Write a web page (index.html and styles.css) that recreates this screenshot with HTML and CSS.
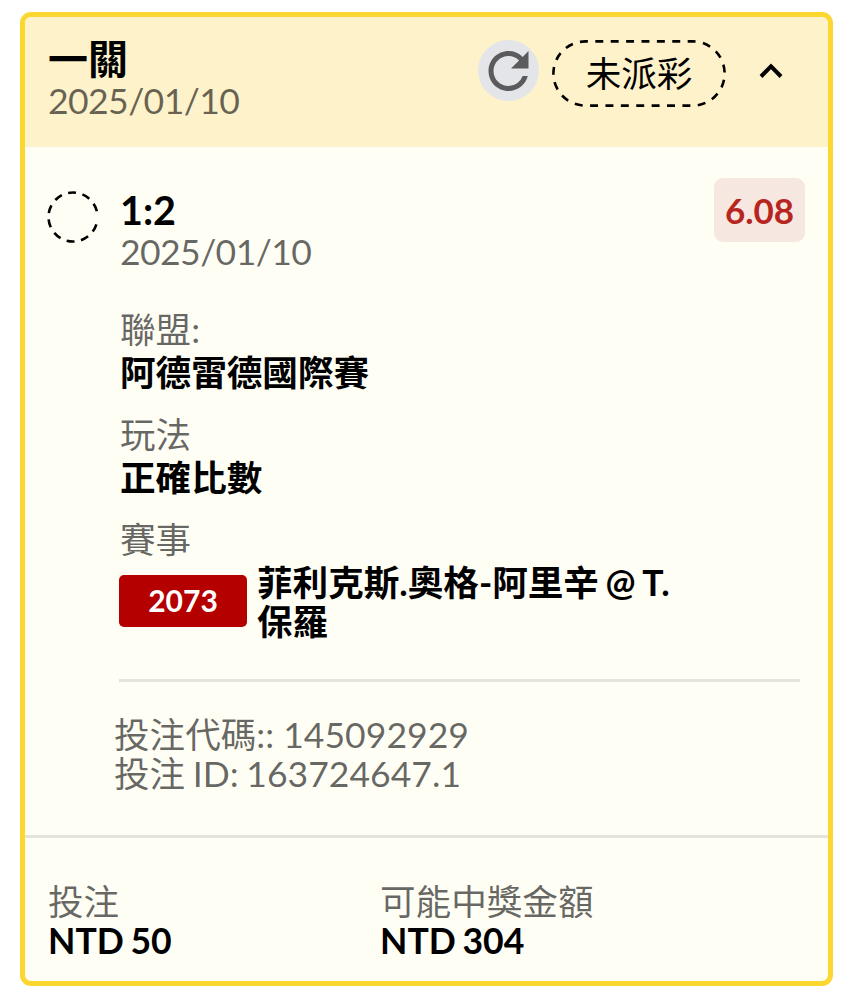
FILE: index.html
```html
<!DOCTYPE html>
<html lang="zh-Hant">
<head>
  <meta charset="UTF-8">
  <title>投注紀錄</title>
  <meta name="viewport" content="width=device-width, initial-scale=1">
  <link rel="stylesheet" href="styles.css">
</head>
<body>
  <div class="card">
    <header class="card-header">
      <div class="heading">
        <div class="title">一關</div>
        <div class="date">2025/01/10</div>
      </div>
      <button class="refresh" aria-label="refresh">
        <svg viewBox="0 0 24 24"><path d="M17.65 6.35A7.958 7.958 0 0 0 12 4c-4.42 0-7.99 3.58-7.99 8s3.57 8 7.99 8c3.73 0 6.84-2.55 7.73-6h-2.08A5.99 5.99 0 0 1 12 18c-3.31 0-6-2.69-6-6s2.69-6 6-6c1.66 0 3.14.69 4.22 1.78L13 11h7V4l-2.35 2.35z"/></svg>
      </button>
      <div class="status">
        <svg class="status-outline" viewBox="0 0 174 67"><rect x="1.4" y="1.4" width="171.2" height="64.2" rx="32" pathLength="418.5"/></svg>
        <span>未派彩</span>
      </div>
      <svg class="chevron" viewBox="0 0 24 16"><path d="M2 13.5 12 3.3l10 10.2"/></svg>
    </header>

    <section class="selection">
      <svg class="dot" viewBox="0 0 52 52"><circle cx="26" cy="26" r="24.5" pathLength="360"/></svg>
      <div class="details">
        <div class="pick-row">
          <div>
            <div class="pick">1:2</div>
            <div class="date">2025/01/10</div>
          </div>
          <div class="odds">6.08</div>
        </div>
        <dl class="info">
          <dt>聯盟:</dt>
          <dd>阿德雷德國際賽</dd>
          <dt>玩法</dt>
          <dd>正確比數</dd>
          <dt>賽事</dt>
        </dl>
        <div class="match">
          <span class="match-code">2073</span>
          <span class="match-name">菲利克斯.奧格-阿里辛 @ T.<br>保羅</span>
        </div>
        <div class="ids">
          <div>投注代碼:: 145092929</div>
          <div class="bet-id">投注 ID: 163724647.1</div>
        </div>
      </div>
    </section>

    <footer class="totals">
      <div>
        <div class="label">投注</div>
        <div class="amount">NTD 50</div>
      </div>
      <div>
        <div class="label">可能中獎金額</div>
        <div class="amount">NTD 304</div>
      </div>
    </footer>
  </div>
</body>
</html>
```
FILE: styles.css
```css
* {
  box-sizing: border-box;
}
body {
  margin: 0;
  padding: 12px 25px 14px 20px;
  background: #fff;
  color: #000;
  font-family: Lato, "Noto Sans CJK TC", sans-serif;
  font-size: 35.6px;
  line-height: 42px;
}
.card {
  height: 974px;
  border: 5px solid #fbd72f;
  border-radius: 11px;
  background: #fffef5;
  overflow: hidden;
}
.date {
  color: rgba(0, 0, 0, 0.6);
  letter-spacing: -0.6px;
}

/* header */
.card-header {
  display: flex;
  align-items: flex-start;
  height: 130px;
  padding: 21px 45px 0 23px;
  background: #fef2cb;
}
.heading {
  flex: 1;
}
.title {
  font-size: 40px;
  font-weight: bold;
}
.refresh {
  width: 61px;
  height: 61px;
  margin: 2px 13px 0 0;
  padding: 0;
  border: none;
  border-radius: 50%;
  background: #e4e5e8;
}
.refresh svg {
  display: block;
  width: 61px;
  height: 61px;
  padding-top: 1px;
  fill: #5b5b5e;
}
.status {
  position: relative;
  width: 174px;
  height: 67px;
  margin-top: 2px;
  line-height: 68px;
  text-align: center;
}
.status-outline {
  position: absolute;
  top: 0;
  left: 0;
  width: 174px;
  height: 67px;
}
.status-outline rect {
  fill: none;
  stroke: #000;
  stroke-width: 2.6;
  stroke-dasharray: 8 7.5;
  stroke-dashoffset: -10;
}
.chevron {
  width: 24px;
  height: 16px;
  margin: 25px 0 0 33px;
  fill: none;
  stroke: #000;
  stroke-width: 4;
}

/* selection */
.selection {
  display: flex;
  height: 688px;
  padding: 31px 23px 0 22px;
}
.dot {
  width: 52px;
  height: 52px;
  margin: 13px 20px 0 0;
}
.dot circle {
  fill: none;
  stroke: #000;
  stroke-width: 2.6;
  stroke-dasharray: 0 17.5 19 15.4 19 15.4 19 15.4 19 15.4 19 15.4 19 15.4 19 15.4 19 15.4 19 15.4 19 40;
}
.details {
  flex: 1;
}
.pick-row {
  display: flex;
  justify-content: space-between;
  padding: 11px 0 0 1px;
}
.pick {
  font-size: 39.5px;
  font-weight: bold;
}
.odds {
  width: 91px;
  height: 64px;
  margin-top: -11px;
  border-radius: 9px;
  background: #f7e7e1;
  color: #b7261e;
  font-size: 35px;
  font-weight: bold;
  line-height: 65px;
  text-align: center;
}
.info {
  margin: 36px 0 0 1px;
}
.info dt {
  height: 43px;
  color: rgba(0, 0, 0, 0.6);
}
.info dd {
  margin: 0 0 20px;
  font-weight: bold;
}
.match {
  display: flex;
  margin-right: 5px;
  padding: 1px 0 38px;
  border-bottom: 3px solid #e5e3db;
}
.match-code {
  width: 128px;
  height: 52px;
  margin: 12px 10px 0 0;
  border-radius: 5px;
  background: #b50000;
  color: #fff;
  font-size: 30px;
  font-weight: bold;
  line-height: 51px;
  text-align: center;
}
.match-name {
  font-weight: bold;
  line-height: 39px;
  word-spacing: -2px;
}
.ids {
  margin: 34px 0 0 -5px;
  color: rgba(0, 0, 0, 0.6);
  line-height: 38.5px;
}
.bet-id {
  word-spacing: -1.5px;
}

/* totals */
.totals {
  display: grid;
  grid-template-columns: 332px 1fr;
  padding: 44px 23px 0;
  border-top: 3px solid #e5e4da;
  line-height: 39px;
}
.label {
  color: rgba(0, 0, 0, 0.6);
}
.amount {
  font-weight: bold;
  word-spacing: -2px;
}
```
